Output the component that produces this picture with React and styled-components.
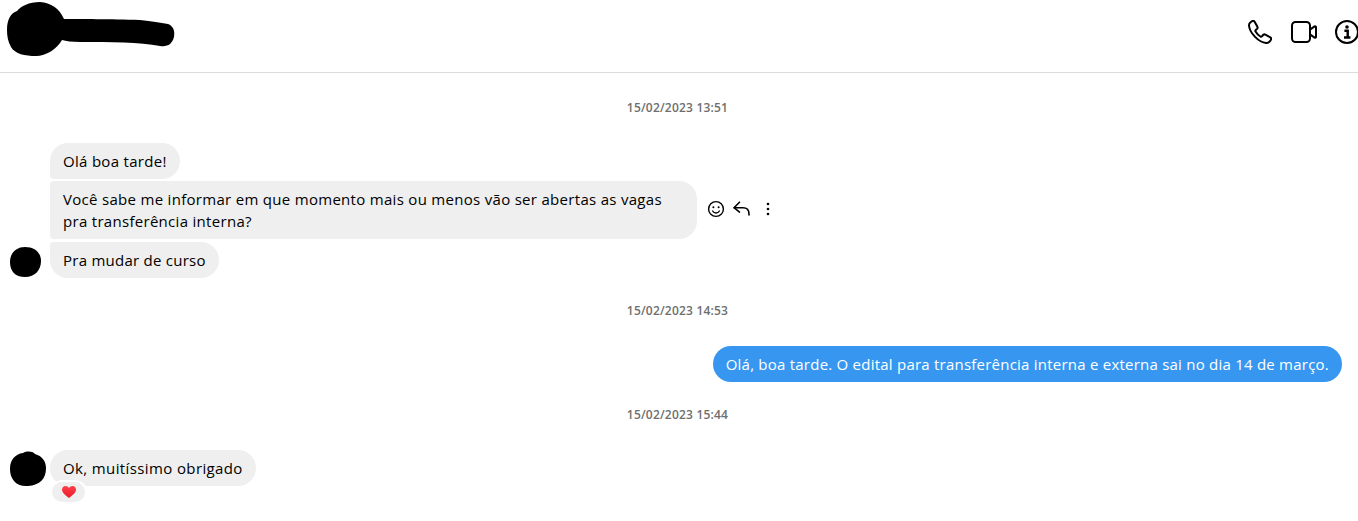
import React from "react";
import styled, { createGlobalStyle } from "styled-components";

const Global = createGlobalStyle`
  html, body { margin: 0; padding: 0; background: #fff; overflow: hidden; }
  body { font-family: "Open Sans", "Noto Sans", Arial, sans-serif; color: #000; }
`;
const Page = styled.div`
  width: 1358px; height: 521px; overflow: hidden; display: flex; flex-direction: column;
`;
const Header = styled.header`
  height: 72px; flex: none; border-bottom: 1px solid #dbdbdb;
  display: flex; align-items: center; justify-content: space-between;
`;
const NameBlot = styled.svg`
  width: 180px; height: 60px; flex: none; margin-top: -12px;
`;
const HeaderActions = styled.div`
  display: flex; align-items: center; margin-right: -1px; margin-top: -9px;
`;
const HeaderIcon = styled.svg`
  width: ${p => p.$w || 24}px; height: 24px; flex: none; display: block; margin-left: ${p => p.$ml || 0}px;
`;
const Thread = styled.main`
  flex: 1; display: flex; flex-direction: column; padding: 0 16px 0 10px;
`;
const Stamp = styled.div`
  height: 16px; line-height: 16px; text-align: center; font-size: 12px; font-weight: 600; color: #6e6e6e;
  margin-top: ${p => p.$mt}px; margin-bottom: ${p => p.$mb}px; letter-spacing: 0.2px;
  padding-left: 3px;
`;
const Group = styled.div`
  display: grid; grid-template-columns: 30px 1fr; column-gap: 10px; row-gap: 2px;
`;
const AvatarSlot = styled.div`
  grid-column: 1; align-self: end; height: 36px; position: relative;
`;
const Blot = styled.svg`
  position: absolute; left: 0; bottom: ${p => p.$b || 0}px; display: block; overflow: visible;
`;
const Row = styled.div`
  grid-column: 2; display: flex; align-items: center; min-width: 0; margin-top: ${p => p.$mt || 0}px;
`;
const Bubble = styled.div`
  background: ${p => (p.$me ? "#3797f0" : "#efefef")};
  color: ${p => (p.$me ? "#fff" : "#000")};
  font-size: 15px; line-height: 22px; padding: 7px 13px;
  border-radius: ${p => p.$radius || "18px"};
  position: relative; letter-spacing: ${p => p.$ls ?? 0.3}px;
  white-space: pre-line; box-sizing: border-box;
  width: ${p => (p.$w ? `${p.$w}px` : "auto")};
`;
const Tools = styled.div`
  display: flex; align-items: center; margin-left: 9px; height: 20px; margin-top: -3px;
`;
const ToolIcon = styled.svg`
  display: block; width: ${p => p.$w}px; height: 20px; margin-right: ${p => p.$mr || 0}px;
`;
const MineRow = styled.div`
  display: flex; justify-content: flex-end;
`;
const Reaction = styled.div`
  position: absolute; left: 0; bottom: -18px; width: 33px; height: 20px;
  border: 2px solid #fff; border-radius: 12px; background: #efefef;
  display: flex; align-items: center; justify-content: center;
`;

const PhoneIcon = () => (
  <HeaderIcon viewBox="0 0 24 24" fill="none" stroke="#000" strokeWidth="2" strokeLinejoin="round">
    <path d="M18 23C11 22.500 1.500 13 1 5.500 .9 4 1.600 3 2.600 2.200L4 1.200C5 .6 6 .8 6.600 1.700L9.300 6.600C9.800 7.400 9.600 8.300 9 8.900L7.800 10C7.300 10.500 7.200 11 7.500 11.600 8.700 13.600 10.400 15.300 12.400 16.500 13 16.800 13.500 16.700 14 16.200L15.100 15C15.700 14.400 16.600 14.200 17.400 14.700L22.300 17.400C23.200 18 23.400 19 22.800 20L21.800 21.400C21 22.400 20 23.100 18 23Z" />
  </HeaderIcon>
);
const VideoIcon = () => (
  <HeaderIcon $ml={19} $w={26} viewBox="0 0 26 24" fill="none" stroke="#000" strokeWidth="2" strokeLinejoin="round">
    <rect x="1" y="2" width="18" height="20" rx="3.500" />
    <path d="M19 9.600l4.600-3.200c.6-.4 1.400 0 1.400.7v9.800c0 .7-.8 1.100-1.400.7L19 14.400Z" />
  </HeaderIcon>
);
const InfoIcon = () => (
  <HeaderIcon $ml={18} viewBox="0 0 24 24" fill="none" stroke="#000" strokeWidth="2">
    <circle cx="12" cy="12" r="11" />
    <circle cx="12" cy="7" r="1.800" fill="#000" stroke="none" />
    <path d="M9.400 10.800h3.300v6.400M9 17.500h6.400" strokeWidth="2.400" />
  </HeaderIcon>
);
const Smile = () => (
  <ToolIcon $w={20} $mr={6} viewBox="0 0 20 20" fill="none" stroke="#000" strokeWidth="1.400" strokeLinecap="round">
    <circle cx="10" cy="10" r="7.400" />
    <circle cx="7.400" cy="8.200" r="1" fill="#000" stroke="none" />
    <circle cx="12.600" cy="8.200" r="1" fill="#000" stroke="none" />
    <path d="M6.600 12c.8 1.300 2 2 3.400 2s2.600-.7 3.400-2" />
  </ToolIcon>
);
const Reply = () => (
  <ToolIcon $w={20} $mr={6} viewBox="0 0 20 20" fill="none" stroke="#000" strokeWidth="1.600" strokeLinecap="round" strokeLinejoin="round">
    <path d="M7.500 3.200 2 8.700l5.500 4.400" />
    <path d="M2.200 8.700H11c3.600 0 6 2.200 6 6.200v1" />
  </ToolIcon>
);
const Dots = () => (
  <ToolIcon $w={20} viewBox="0 0 20 20" fill="#000">
    <circle cx="10" cy="5" r="1.300" />
    <circle cx="10" cy="10" r="1.300" />
    <circle cx="10" cy="15" r="1.300" />
  </ToolIcon>
);
const Heart = () => (
  <svg width="14" height="12" viewBox="0 0 14 12" style={{ display: "block" }}>
    <defs>
      <linearGradient id="hg" x1="0" y1="0" x2="0" y2="1">
        <stop offset="0" stopColor="#fb3f48" />
        <stop offset="1" stopColor="#ec1c2c" />
      </linearGradient>
    </defs>
    <path fill="url(#hg)" d="M7 12C3.600 9.400 0 6.800 0 3.600 0 1.500 1.600 0 3.500 0 5 0 6.200.8 7 2 7.800.8 9 0 10.500 0 12.400 0 14 1.500 14 3.600 14 6.800 10.400 9.400 7 12Z" />
  </svg>
);

export default function App() {
  return (
    <Page>
      <Global />
      <Header>
        <NameBlot viewBox="0 0 180 60">
          <path d="M7 30C7 19 11 13 17 11 21 6 29 2 40 2 51 3 59 8 64 19 80 19 110 19 140 20 152 21 160 23 168 24 173 26 175 30 174 37 172 44 168 47 160 46 140 42 110 42 80 42 72 42 66 41 62 40 57 49 46 56 36 56 25 56 15 54 11 47 8 42 7 36 7 30Z" />
        </NameBlot>
        <HeaderActions>
          <PhoneIcon />
          <VideoIcon />
          <InfoIcon />
        </HeaderActions>
      </Header>
      <Thread>
        <Stamp $mt={27} $mb={27}>15/02/2023 13:51</Stamp>
        <Group>
          <Row>
            <Bubble $radius="18px 18px 18px 4px">Olá boa tarde!</Bubble>
          </Row>
          <Row>
            <Bubble $w={647} $radius="4px 18px 18px 4px">
              {"Você sabe me informar em que momento mais ou menos vão ser abertas as vagas\npra transferência interna?"}
            </Bubble>
            <Tools>
              <Smile />
              <Reply />
              <Dots />
            </Tools>
          </Row>
          <AvatarSlot>
            <Blot $b={1} width="31" height="30" viewBox="0 0 31 30">
              <path d="M0 15C0 6 6 0 15 0c9 0 16 5 16 14 0 9-6 16-16 16C5 30 0 24 0 15Z" />
            </Blot>
          </AvatarSlot>
          <Row $mt={1}>
            <Bubble $ls={0.25} $radius="4px 18px 18px 18px">Pra mudar de curso</Bubble>
          </Row>
        </Group>
        <Stamp $mt={25} $mb={27}>15/02/2023 14:53</Stamp>
        <MineRow>
          <Bubble $me $ls={0.23}>Olá, boa tarde. O edital para transferência interna e externa sai no dia 14 de março.</Bubble>
        </MineRow>
        <Stamp $mt={25} $mb={27}>15/02/2023 15:44</Stamp>
        <Group>
          <AvatarSlot>
            <Blot $b={-1} width="36" height="36" viewBox="0 0 36 36">
              <path d="M0 18C0 9 5 3 13 2 17 0 22 0 25 3 32 5 36 10 36 17 36 28 30 34 18 35 6 36 0 28 0 18Z" />
            </Blot>
          </AvatarSlot>
          <Row>
            <Bubble $ls={0.38}>
              Ok, muitíssimo obrigado
              <Reaction><Heart /></Reaction>
            </Bubble>
          </Row>
        </Group>
      </Thread>
    </Page>
  );
}
